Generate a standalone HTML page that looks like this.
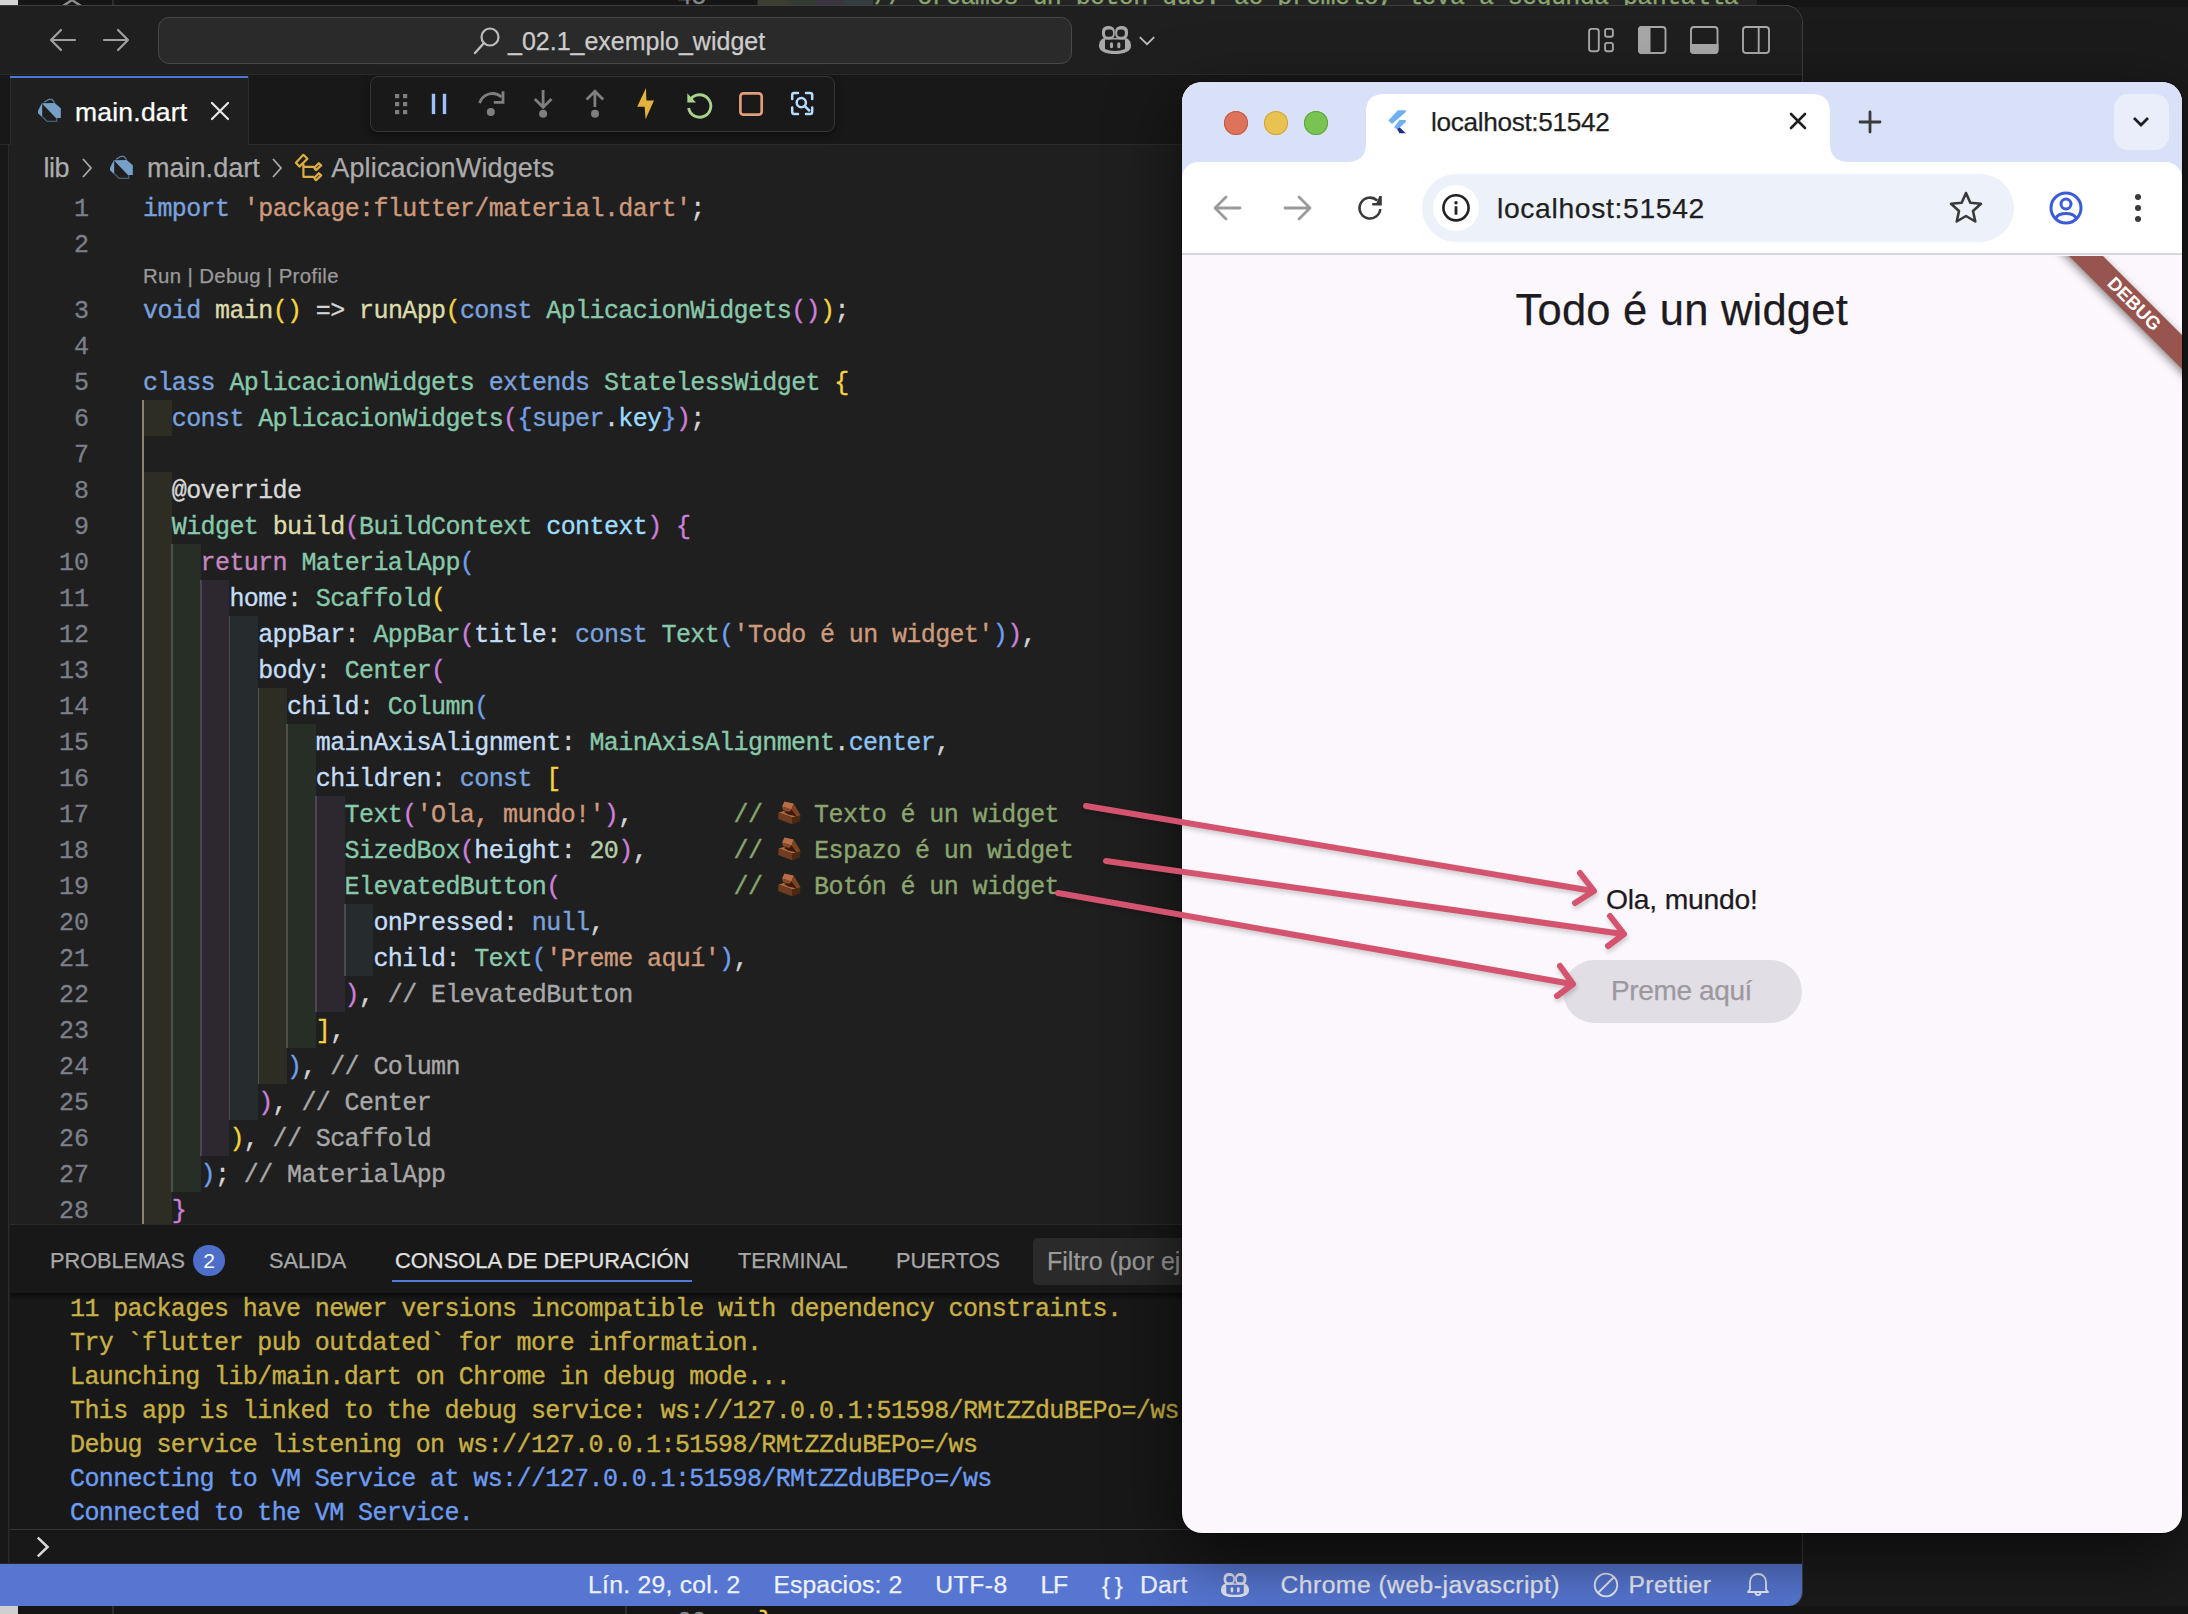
<!DOCTYPE html>
<html><head><meta charset="utf-8"><style>
*{margin:0;padding:0;box-sizing:border-box}
html,body{width:2188px;height:1614px;overflow:hidden;background:#1b1b1b;position:relative}
body{font-family:"Liberation Sans",sans-serif}
.abs{position:absolute}
.t{position:absolute;line-height:1;white-space:nowrap;-webkit-text-stroke:0.25px currentColor}
.cl{position:absolute;font-family:"Liberation Mono",monospace;font-size:25px;letter-spacing:-0.60px;line-height:1;white-space:pre;-webkit-text-stroke:0.35px currentColor}
.ln{position:absolute;left:0;width:89px;text-align:right;font-family:"Liberation Mono",monospace;font-size:25px;letter-spacing:0;line-height:1;color:#7b808a;white-space:pre;-webkit-text-stroke:0.3px currentColor}
.rb{position:absolute}
.gd{position:absolute;width:1.5px}
.brick{display:inline-block;width:23px;height:1px;letter-spacing:0}
</style></head><body>
<div class="abs" style="left:0;top:0;width:2188px;height:7px;background:#151515;overflow:hidden"><div class="abs" style="left:0;top:0;width:18px;height:7px;background:#d4d4d4"></div><svg class="abs" style="left:60px;top:-8px" width="24" height="16" viewBox="0 0 24 16"><path d="M3 14 L21 2 M3 2 L21 14" stroke="#8a8a8a" stroke-width="2.5"/></svg><div class="abs" style="left:112px;top:0;width:1.5px;height:7px;background:#2c2c2c"></div><div class="abs" style="left:757px;top:0;width:1000px;height:7px;background:#242424"></div><div class="abs" style="left:758px;top:0;width:30px;height:7px;background:#3a3d30"></div><div class="abs" style="left:788px;top:0;width:28px;height:7px;background:#343b33"></div><div class="abs" style="left:816px;top:0;width:28px;height:7px;background:#3b3540"></div><div class="abs" style="left:844px;top:0;width:29px;height:7px;background:#333d40"></div><div class="cl" style="left:677px;top:-15px;color:#858585">45</div><div class="cl" style="left:874px;top:-15px;color:#8aa56e">// creamos un botón que: ao premelo, leva a segunda pantalla</div></div>
<div class="abs" id="vsc" style="left:0;top:6px;width:1802px;height:1600px;background:#1f1f1f;border-top-right-radius:17px;border-bottom-right-radius:14px;overflow:hidden;box-shadow:0 0 0 1px #3e3e3e, 0 -1px 0 0 #6a6a6a">
<div class="abs" style="left:0;top:0;width:1802px;height:69px;background:#1f1f1f;border-bottom:1px solid #2b2b2b"></div>
</div>
<div class="abs" style="left:0;top:145px;width:9px;height:1420px;background:#181818;border-right:1px solid #2b2b2b"></div>
<div class="abs" style="left:158px;top:17px;width:914px;height:47px;background:#2a2a2a;border:1.5px solid #474747;border-radius:11px"></div>
<svg class="abs" style="left:470px;top:24px" width="34" height="34" viewBox="0 0 34 34"><circle cx="20" cy="13" r="8.5" fill="none" stroke="#bdbdbd" stroke-width="2.2"/><path d="M14 19 L5 29" stroke="#bdbdbd" stroke-width="2.4" stroke-linecap="round"/></svg>
<div class="t" style="left:508.0px;top:28.8px;font-size:25.00px;color:#cccccc;">_02.1_exemplo_widget</div>
<svg class="abs" style="left:46px;top:26px" width="34" height="28" viewBox="0 0 34 28"><path d="M29 14 H5 M15 4 L5 14 L15 24" fill="none" stroke="#a0a0a0" stroke-width="2.2" stroke-linecap="round" stroke-linejoin="round"/></svg>
<svg class="abs" style="left:100px;top:26px" width="34" height="28" viewBox="0 0 34 28"><path d="M4 14 H28 M18 4 L28 14 L18 24" fill="none" stroke="#a0a0a0" stroke-width="2.2" stroke-linecap="round" stroke-linejoin="round"/></svg>
<svg class="abs" style="left:1099.0px;top:26.0px" width="32.0" height="28.0" viewBox="0 0 32 28"><path d="M0 20 C0 15 3 12 6 12 L26 12 C29 12 32 15 32 20 C32 25.5 25 28 16 28 C7 28 0 25.5 0 20 Z" fill="#a8a8a8"/><path d="M6 13.5 H26 V23 C20 25.5 12 25.5 6 23 Z" fill="#1f1f1f"/><rect x="3" y="0" width="12.8" height="13.5" rx="5.5" fill="#a8a8a8"/><rect x="16.2" y="0" width="12.8" height="13.5" rx="5.5" fill="#a8a8a8"/><rect x="6" y="3.4" width="8" height="7.3" rx="3" fill="#1f1f1f"/><rect x="18.2" y="3.4" width="7.6" height="7.3" rx="3" fill="#1f1f1f"/><rect x="11" y="16.2" width="3" height="6" rx="1.5" fill="#a8a8a8"/><rect x="18.3" y="16.2" width="3" height="6" rx="1.5" fill="#a8a8a8"/></svg>
<svg class="abs" style="left:1136px;top:33px" width="22" height="16" viewBox="1136 33 22 16"><path d="M1139.8 37.2 L1147 44.2 L1154.2 37.2" fill="none" stroke="#bdbdbd" stroke-width="1.8"/></svg>
<svg class="abs" style="left:1580px;top:20px" width="200" height="40" viewBox="1580 20 200 40"><g fill="none" stroke="#a8a8a8" stroke-width="1.9"><rect x="1589.1" y="28.9" width="9.7" height="22.3" rx="2.5"/><rect x="1605.1" y="28.9" width="7.8" height="7.8" rx="2"/><rect x="1605.1" y="42.9" width="7.8" height="8.3" rx="2"/><rect x="1639" y="27" width="26.5" height="26" rx="3"/><rect x="1691" y="27" width="26.5" height="26" rx="3"/><rect x="1743" y="27" width="26" height="26" rx="3"/><path d="M1758.7 27 V53"/></g><g fill="#a8a8a8"><path d="M1642 26 H1650.5 V54 H1642 Q1638 54 1638 50 V30 Q1638 26 1642 26 Z"/><path d="M1690 44 H1718.5 V50 Q1718.5 54 1714.5 54 H1694 Q1690 54 1690 50 Z"/></g></svg>
<div class="abs" style="left:0;top:75px;width:1802px;height:70px;background:#181818;border-bottom:1px solid #2b2b2b"></div>
<div class="abs" style="left:10px;top:76px;width:239px;height:69px;background:#1f1f1f;border-right:1px solid #2b2b2b;border-left:1px solid #2b2b2b"></div>
<div class="abs" style="left:10px;top:76px;width:238px;height:2px;background:#4a78d8"></div>
<svg class="abs" style="left:37px;top:98px" width="26" height="26" viewBox="0 0 26 26"><path d="M4.8 5.3 L17.7 5.1 L23.8 10.2 L23.8 19.9 L18.9 19.9 Z" fill="#76a0c8"/><path d="M4.8 5.3 L1 12.8 L1 15.2 L5.2 19.2 L5.2 6 Z" fill="#76a0c8"/><path d="M7.1 4.3 L11.8 1.4 L14.9 1.4 L17.5 4.6" fill="none" stroke="#5f82a6" stroke-width="1.3"/><path d="M5.2 18.6 L10.2 23.4 L19.6 23.4 L19.6 19.9" fill="none" stroke="#4a5f76" stroke-width="1.4"/></svg>
<div class="t" style="left:75.0px;top:98.6px;font-size:26.50px;color:#ffffff;letter-spacing:0.215px;">main.dart</div>
<svg class="abs" style="left:209px;top:100px" width="22" height="22" viewBox="0 0 22 22"><path d="M3 3 L19 19 M19 3 L3 19" stroke="#e8e8e8" stroke-width="2.2" stroke-linecap="round"/></svg>
<div class="abs" style="left:10px;top:146px;width:1172px;height:44px;background:#1f1f1f"></div>
<div class="t" style="left:43.4px;top:154.7px;font-size:27.00px;color:#ababab;letter-spacing:-0.404px;">lib</div>
<svg class="abs" style="left:80px;top:157px" width="14" height="22" viewBox="0 0 14 22"><path d="M3 2 L11 11 L3 20" fill="none" stroke="#a8a8a8" stroke-width="1.8"/></svg>
<svg class="abs" style="left:109px;top:155px" width="26" height="26" viewBox="0 0 26 26"><path d="M4.8 5.3 L17.7 5.1 L23.8 10.2 L23.8 19.9 L18.9 19.9 Z" fill="#76a0c8"/><path d="M4.8 5.3 L1 12.8 L1 15.2 L5.2 19.2 L5.2 6 Z" fill="#76a0c8"/><path d="M7.1 4.3 L11.8 1.4 L14.9 1.4 L17.5 4.6" fill="none" stroke="#5f82a6" stroke-width="1.3"/><path d="M5.2 18.6 L10.2 23.4 L19.6 23.4 L19.6 19.9" fill="none" stroke="#4a5f76" stroke-width="1.4"/></svg>
<div class="t" style="left:146.9px;top:154.7px;font-size:27.00px;color:#ababab;letter-spacing:0.050px;">main.dart</div>
<svg class="abs" style="left:270px;top:157px" width="14" height="22" viewBox="0 0 14 22"><path d="M3 2 L11 11 L3 20" fill="none" stroke="#a8a8a8" stroke-width="1.8"/></svg>
<svg class="abs" style="left:290px;top:150px" width="40" height="36" viewBox="290 150 40 36"><g fill="none" stroke="#e0ad42" stroke-width="2.2" stroke-linejoin="round"><path d="M295.9 162.7 L303.4 154.8 L307.4 158.7 L299.4 166.6 Z"/><path d="M303.4 163.8 V176.8 H314 M303.4 166.8 H314.3"/><path d="M314.2 167.8 L318.8 163.2 L321.2 165.4 L316 170.1 Z"/><path d="M314.2 177.9 L318.8 173.2 L321.2 175.4 L316 180.3 Z"/></g></svg>
<div class="t" style="left:331.3px;top:154.7px;font-size:27.00px;color:#ababab;letter-spacing:0.141px;">AplicacionWidgets</div>
<div class="t" style="left:143.0px;top:266.4px;font-size:20.40px;color:#9a9a9a;letter-spacing:0.351px;">Run | Debug | Profile</div>
<div class="abs" id="code" style="left:0;top:0;width:1182px;height:1224px;overflow:hidden">
<div class="rb" style="left:143.0px;top:399.9px;width:28.8px;height:36px;background:#2e2d24"></div>
<div class="rb" style="left:143.0px;top:471.9px;width:28.8px;height:36px;background:#2e2d24"></div>
<div class="rb" style="left:143.0px;top:507.9px;width:28.8px;height:36px;background:#2e2d24"></div>
<div class="rb" style="left:143.0px;top:543.9px;width:28.8px;height:36px;background:#2e2d24"></div>
<div class="rb" style="left:171.8px;top:543.9px;width:28.8px;height:36px;background:#272e26"></div>
<div class="rb" style="left:143.0px;top:579.9px;width:28.8px;height:36px;background:#2e2d24"></div>
<div class="rb" style="left:171.8px;top:579.9px;width:28.8px;height:36px;background:#272e26"></div>
<div class="rb" style="left:200.6px;top:579.9px;width:28.8px;height:36px;background:#2d272f"></div>
<div class="rb" style="left:143.0px;top:615.9px;width:28.8px;height:36px;background:#2e2d24"></div>
<div class="rb" style="left:171.8px;top:615.9px;width:28.8px;height:36px;background:#272e26"></div>
<div class="rb" style="left:200.6px;top:615.9px;width:28.8px;height:36px;background:#2d272f"></div>
<div class="rb" style="left:229.4px;top:615.9px;width:28.8px;height:36px;background:#262c2e"></div>
<div class="rb" style="left:143.0px;top:651.9px;width:28.8px;height:36px;background:#2e2d24"></div>
<div class="rb" style="left:171.8px;top:651.9px;width:28.8px;height:36px;background:#272e26"></div>
<div class="rb" style="left:200.6px;top:651.9px;width:28.8px;height:36px;background:#2d272f"></div>
<div class="rb" style="left:229.4px;top:651.9px;width:28.8px;height:36px;background:#262c2e"></div>
<div class="rb" style="left:143.0px;top:687.9px;width:28.8px;height:36px;background:#2e2d24"></div>
<div class="rb" style="left:171.8px;top:687.9px;width:28.8px;height:36px;background:#272e26"></div>
<div class="rb" style="left:200.6px;top:687.9px;width:28.8px;height:36px;background:#2d272f"></div>
<div class="rb" style="left:229.4px;top:687.9px;width:28.8px;height:36px;background:#262c2e"></div>
<div class="rb" style="left:258.2px;top:687.9px;width:28.8px;height:36px;background:#2e2d24"></div>
<div class="rb" style="left:143.0px;top:723.9px;width:28.8px;height:36px;background:#2e2d24"></div>
<div class="rb" style="left:171.8px;top:723.9px;width:28.8px;height:36px;background:#272e26"></div>
<div class="rb" style="left:200.6px;top:723.9px;width:28.8px;height:36px;background:#2d272f"></div>
<div class="rb" style="left:229.4px;top:723.9px;width:28.8px;height:36px;background:#262c2e"></div>
<div class="rb" style="left:258.2px;top:723.9px;width:28.8px;height:36px;background:#2e2d24"></div>
<div class="rb" style="left:287.0px;top:723.9px;width:28.8px;height:36px;background:#272e26"></div>
<div class="rb" style="left:143.0px;top:759.9px;width:28.8px;height:36px;background:#2e2d24"></div>
<div class="rb" style="left:171.8px;top:759.9px;width:28.8px;height:36px;background:#272e26"></div>
<div class="rb" style="left:200.6px;top:759.9px;width:28.8px;height:36px;background:#2d272f"></div>
<div class="rb" style="left:229.4px;top:759.9px;width:28.8px;height:36px;background:#262c2e"></div>
<div class="rb" style="left:258.2px;top:759.9px;width:28.8px;height:36px;background:#2e2d24"></div>
<div class="rb" style="left:287.0px;top:759.9px;width:28.8px;height:36px;background:#272e26"></div>
<div class="rb" style="left:143.0px;top:795.9px;width:28.8px;height:36px;background:#2e2d24"></div>
<div class="rb" style="left:171.8px;top:795.9px;width:28.8px;height:36px;background:#272e26"></div>
<div class="rb" style="left:200.6px;top:795.9px;width:28.8px;height:36px;background:#2d272f"></div>
<div class="rb" style="left:229.4px;top:795.9px;width:28.8px;height:36px;background:#262c2e"></div>
<div class="rb" style="left:258.2px;top:795.9px;width:28.8px;height:36px;background:#2e2d24"></div>
<div class="rb" style="left:287.0px;top:795.9px;width:28.8px;height:36px;background:#272e26"></div>
<div class="rb" style="left:315.8px;top:795.9px;width:28.8px;height:36px;background:#2d272f"></div>
<div class="rb" style="left:143.0px;top:831.9px;width:28.8px;height:36px;background:#2e2d24"></div>
<div class="rb" style="left:171.8px;top:831.9px;width:28.8px;height:36px;background:#272e26"></div>
<div class="rb" style="left:200.6px;top:831.9px;width:28.8px;height:36px;background:#2d272f"></div>
<div class="rb" style="left:229.4px;top:831.9px;width:28.8px;height:36px;background:#262c2e"></div>
<div class="rb" style="left:258.2px;top:831.9px;width:28.8px;height:36px;background:#2e2d24"></div>
<div class="rb" style="left:287.0px;top:831.9px;width:28.8px;height:36px;background:#272e26"></div>
<div class="rb" style="left:315.8px;top:831.9px;width:28.8px;height:36px;background:#2d272f"></div>
<div class="rb" style="left:143.0px;top:867.9px;width:28.8px;height:36px;background:#2e2d24"></div>
<div class="rb" style="left:171.8px;top:867.9px;width:28.8px;height:36px;background:#272e26"></div>
<div class="rb" style="left:200.6px;top:867.9px;width:28.8px;height:36px;background:#2d272f"></div>
<div class="rb" style="left:229.4px;top:867.9px;width:28.8px;height:36px;background:#262c2e"></div>
<div class="rb" style="left:258.2px;top:867.9px;width:28.8px;height:36px;background:#2e2d24"></div>
<div class="rb" style="left:287.0px;top:867.9px;width:28.8px;height:36px;background:#272e26"></div>
<div class="rb" style="left:315.8px;top:867.9px;width:28.8px;height:36px;background:#2d272f"></div>
<div class="rb" style="left:143.0px;top:903.9px;width:28.8px;height:36px;background:#2e2d24"></div>
<div class="rb" style="left:171.8px;top:903.9px;width:28.8px;height:36px;background:#272e26"></div>
<div class="rb" style="left:200.6px;top:903.9px;width:28.8px;height:36px;background:#2d272f"></div>
<div class="rb" style="left:229.4px;top:903.9px;width:28.8px;height:36px;background:#262c2e"></div>
<div class="rb" style="left:258.2px;top:903.9px;width:28.8px;height:36px;background:#2e2d24"></div>
<div class="rb" style="left:287.0px;top:903.9px;width:28.8px;height:36px;background:#272e26"></div>
<div class="rb" style="left:315.8px;top:903.9px;width:28.8px;height:36px;background:#2d272f"></div>
<div class="rb" style="left:344.6px;top:903.9px;width:28.8px;height:36px;background:#262c2e"></div>
<div class="rb" style="left:143.0px;top:939.9px;width:28.8px;height:36px;background:#2e2d24"></div>
<div class="rb" style="left:171.8px;top:939.9px;width:28.8px;height:36px;background:#272e26"></div>
<div class="rb" style="left:200.6px;top:939.9px;width:28.8px;height:36px;background:#2d272f"></div>
<div class="rb" style="left:229.4px;top:939.9px;width:28.8px;height:36px;background:#262c2e"></div>
<div class="rb" style="left:258.2px;top:939.9px;width:28.8px;height:36px;background:#2e2d24"></div>
<div class="rb" style="left:287.0px;top:939.9px;width:28.8px;height:36px;background:#272e26"></div>
<div class="rb" style="left:315.8px;top:939.9px;width:28.8px;height:36px;background:#2d272f"></div>
<div class="rb" style="left:344.6px;top:939.9px;width:28.8px;height:36px;background:#262c2e"></div>
<div class="rb" style="left:143.0px;top:975.9px;width:28.8px;height:36px;background:#2e2d24"></div>
<div class="rb" style="left:171.8px;top:975.9px;width:28.8px;height:36px;background:#272e26"></div>
<div class="rb" style="left:200.6px;top:975.9px;width:28.8px;height:36px;background:#2d272f"></div>
<div class="rb" style="left:229.4px;top:975.9px;width:28.8px;height:36px;background:#262c2e"></div>
<div class="rb" style="left:258.2px;top:975.9px;width:28.8px;height:36px;background:#2e2d24"></div>
<div class="rb" style="left:287.0px;top:975.9px;width:28.8px;height:36px;background:#272e26"></div>
<div class="rb" style="left:315.8px;top:975.9px;width:28.8px;height:36px;background:#2d272f"></div>
<div class="rb" style="left:143.0px;top:1011.9px;width:28.8px;height:36px;background:#2e2d24"></div>
<div class="rb" style="left:171.8px;top:1011.9px;width:28.8px;height:36px;background:#272e26"></div>
<div class="rb" style="left:200.6px;top:1011.9px;width:28.8px;height:36px;background:#2d272f"></div>
<div class="rb" style="left:229.4px;top:1011.9px;width:28.8px;height:36px;background:#262c2e"></div>
<div class="rb" style="left:258.2px;top:1011.9px;width:28.8px;height:36px;background:#2e2d24"></div>
<div class="rb" style="left:287.0px;top:1011.9px;width:28.8px;height:36px;background:#272e26"></div>
<div class="rb" style="left:143.0px;top:1047.9px;width:28.8px;height:36px;background:#2e2d24"></div>
<div class="rb" style="left:171.8px;top:1047.9px;width:28.8px;height:36px;background:#272e26"></div>
<div class="rb" style="left:200.6px;top:1047.9px;width:28.8px;height:36px;background:#2d272f"></div>
<div class="rb" style="left:229.4px;top:1047.9px;width:28.8px;height:36px;background:#262c2e"></div>
<div class="rb" style="left:258.2px;top:1047.9px;width:28.8px;height:36px;background:#2e2d24"></div>
<div class="rb" style="left:143.0px;top:1083.9px;width:28.8px;height:36px;background:#2e2d24"></div>
<div class="rb" style="left:171.8px;top:1083.9px;width:28.8px;height:36px;background:#272e26"></div>
<div class="rb" style="left:200.6px;top:1083.9px;width:28.8px;height:36px;background:#2d272f"></div>
<div class="rb" style="left:229.4px;top:1083.9px;width:28.8px;height:36px;background:#262c2e"></div>
<div class="rb" style="left:143.0px;top:1119.9px;width:28.8px;height:36px;background:#2e2d24"></div>
<div class="rb" style="left:171.8px;top:1119.9px;width:28.8px;height:36px;background:#272e26"></div>
<div class="rb" style="left:200.6px;top:1119.9px;width:28.8px;height:36px;background:#2d272f"></div>
<div class="rb" style="left:143.0px;top:1155.9px;width:28.8px;height:36px;background:#2e2d24"></div>
<div class="rb" style="left:171.8px;top:1155.9px;width:28.8px;height:36px;background:#272e26"></div>
<div class="rb" style="left:143.0px;top:1191.9px;width:28.8px;height:36px;background:#2e2d24"></div>
<div class="gd" style="left:142.0px;top:399.9px;height:828.0px;background:#8a846e"></div>
<div class="gd" style="left:171.2px;top:543.9px;height:648.0px;background:#4a5147"></div>
<div class="gd" style="left:200.0px;top:579.9px;height:576.0px;background:#4b4651"></div>
<div class="gd" style="left:228.8px;top:615.9px;height:504.0px;background:#464e50"></div>
<div class="gd" style="left:257.6px;top:687.9px;height:396.0px;background:#58553f"></div>
<div class="gd" style="left:286.4px;top:723.9px;height:324.0px;background:#4a5147"></div>
<div class="gd" style="left:315.2px;top:795.9px;height:216.0px;background:#4b4651"></div>
<div class="gd" style="left:344.0px;top:903.9px;height:72.0px;background:#464e50"></div>
<div class="ln" style="top:197.1px">1</div>
<div class="cl" style="left:143.0px;top:197.1px"><span style="color:#7aa2de">import</span><span style="color:#d4d4d4">&nbsp;</span><span style="color:#ce9a7c">&#x27;package:flutter/material.dart&#x27;</span><span style="color:#d4d4d4">;</span></div>
<div class="ln" style="top:233.1px">2</div>
<div class="ln" style="top:299.1px">3</div>
<div class="cl" style="left:143.0px;top:299.1px"><span style="color:#7aa2de">void</span><span style="color:#d4d4d4">&nbsp;</span><span style="color:#dcdcaa">main</span><span style="color:#f5d442">(</span><span style="color:#f5d442">)</span><span style="color:#d4d4d4">&nbsp;=&gt;&nbsp;</span><span style="color:#dcdcaa">runApp</span><span style="color:#f5d442">(</span><span style="color:#7aa2de">const</span><span style="color:#d4d4d4">&nbsp;</span><span style="color:#88c9ab">AplicacionWidgets</span><span style="color:#cd7fdc">(</span><span style="color:#cd7fdc">)</span><span style="color:#f5d442">)</span><span style="color:#d4d4d4">;</span></div>
<div class="ln" style="top:335.1px">4</div>
<div class="ln" style="top:371.1px">5</div>
<div class="cl" style="left:143.0px;top:371.1px"><span style="color:#7aa2de">class</span><span style="color:#d4d4d4">&nbsp;</span><span style="color:#88c9ab">AplicacionWidgets</span><span style="color:#d4d4d4">&nbsp;</span><span style="color:#7aa2de">extends</span><span style="color:#d4d4d4">&nbsp;</span><span style="color:#88c9ab">StatelessWidget</span><span style="color:#d4d4d4">&nbsp;</span><span style="color:#f5d442">{</span></div>
<div class="ln" style="top:407.1px">6</div>
<div class="cl" style="left:171.8px;top:407.1px"><span style="color:#7aa2de">const</span><span style="color:#d4d4d4">&nbsp;</span><span style="color:#88c9ab">AplicacionWidgets</span><span style="color:#cd7fdc">(</span><span style="color:#6fa0ee">{</span><span style="color:#7aa2de">super</span><span style="color:#d4d4d4">.</span><span style="color:#9cdcfe">key</span><span style="color:#6fa0ee">}</span><span style="color:#cd7fdc">)</span><span style="color:#d4d4d4">;</span></div>
<div class="ln" style="top:443.1px">7</div>
<div class="ln" style="top:479.1px">8</div>
<div class="cl" style="left:171.8px;top:479.1px"><span style="color:#d8d8d8">@override</span></div>
<div class="ln" style="top:515.1px">9</div>
<div class="cl" style="left:171.8px;top:515.1px"><span style="color:#88c9ab">Widget</span><span style="color:#d4d4d4">&nbsp;</span><span style="color:#dcdcaa">build</span><span style="color:#cd7fdc">(</span><span style="color:#88c9ab">BuildContext</span><span style="color:#d4d4d4">&nbsp;</span><span style="color:#9cdcfe">context</span><span style="color:#cd7fdc">)</span><span style="color:#d4d4d4">&nbsp;</span><span style="color:#cd7fdc">{</span></div>
<div class="ln" style="top:551.1px">10</div>
<div class="cl" style="left:200.6px;top:551.1px"><span style="color:#c586c0">return</span><span style="color:#d4d4d4">&nbsp;</span><span style="color:#88c9ab">MaterialApp</span><span style="color:#6fa0ee">(</span></div>
<div class="ln" style="top:587.1px">11</div>
<div class="cl" style="left:229.4px;top:587.1px"><span style="color:#c4ddf7">home</span><span style="color:#d4d4d4">:&nbsp;</span><span style="color:#88c9ab">Scaffold</span><span style="color:#f5d442">(</span></div>
<div class="ln" style="top:623.1px">12</div>
<div class="cl" style="left:258.2px;top:623.1px"><span style="color:#c4ddf7">appBar</span><span style="color:#d4d4d4">:&nbsp;</span><span style="color:#88c9ab">AppBar</span><span style="color:#cd7fdc">(</span><span style="color:#c4ddf7">title</span><span style="color:#d4d4d4">:&nbsp;</span><span style="color:#7aa2de">const</span><span style="color:#d4d4d4">&nbsp;</span><span style="color:#88c9ab">Text</span><span style="color:#6fa0ee">(</span><span style="color:#ce9a7c">&#x27;Todo&nbsp;é&nbsp;un&nbsp;widget&#x27;</span><span style="color:#6fa0ee">)</span><span style="color:#cd7fdc">)</span><span style="color:#d4d4d4">,</span></div>
<div class="ln" style="top:659.1px">13</div>
<div class="cl" style="left:258.2px;top:659.1px"><span style="color:#c4ddf7">body</span><span style="color:#d4d4d4">:&nbsp;</span><span style="color:#88c9ab">Center</span><span style="color:#cd7fdc">(</span></div>
<div class="ln" style="top:695.1px">14</div>
<div class="cl" style="left:287.0px;top:695.1px"><span style="color:#c4ddf7">child</span><span style="color:#d4d4d4">:&nbsp;</span><span style="color:#88c9ab">Column</span><span style="color:#6fa0ee">(</span></div>
<div class="ln" style="top:731.1px">15</div>
<div class="cl" style="left:315.8px;top:731.1px"><span style="color:#c4ddf7">mainAxisAlignment</span><span style="color:#d4d4d4">:&nbsp;</span><span style="color:#88c9ab">MainAxisAlignment</span><span style="color:#d4d4d4">.</span><span style="color:#8ec3f3">center</span><span style="color:#d4d4d4">,</span></div>
<div class="ln" style="top:767.1px">16</div>
<div class="cl" style="left:315.8px;top:767.1px"><span style="color:#c4ddf7">children</span><span style="color:#d4d4d4">:&nbsp;</span><span style="color:#7aa2de">const</span><span style="color:#d4d4d4">&nbsp;</span><span style="color:#f5d442">[</span></div>
<div class="ln" style="top:803.1px">17</div>
<div class="abs" style="left:778px;top:800.8px"><svg width="23" height="24" viewBox="0 0 23 24" style="display:block"><path d="M0.5 11.5 L6 10 L22.5 14 L14.5 16.5 Z" fill="#b46a42"/><path d="M0.5 11.5 L14.5 16.5 L14.5 23.5 L0.2 18 Z" fill="#6e3c1f"/><path d="M14.5 16.5 L22.5 14 L22 20.5 L14.5 23.5 Z" fill="#4a2814"/><path d="M6 11 L13.5 8 L19 15.5 L10 13.5 Z" fill="#3a1a0c"/><path d="M4 5.5 L6.5 0.5 L15.8 2.5 L13.5 8.5 Z" fill="#b96d44"/><path d="M4 5.5 L13.5 8.5 L11 11 L5 9 Z" fill="#8a4a26"/><path d="M13.5 8.5 L15.8 2.5 L22.5 14 L19 15.5 Z" fill="#7c4322"/></svg></div>
<div class="cl" style="left:344.6px;top:803.1px"><span style="color:#88c9ab">Text</span><span style="color:#cd7fdc">(</span><span style="color:#ce9a7c">&#x27;Ola,&nbsp;mundo!&#x27;</span><span style="color:#cd7fdc">)</span><span style="color:#d4d4d4">,&nbsp;&nbsp;&nbsp;&nbsp;&nbsp;&nbsp;&nbsp;</span><span style="color:#8aa56e">//&nbsp;</span><span class="brick"></span><span style="color:#8aa56e">&nbsp;Texto&nbsp;é&nbsp;un&nbsp;widget</span></div>
<div class="ln" style="top:839.1px">18</div>
<div class="abs" style="left:778px;top:836.8px"><svg width="23" height="24" viewBox="0 0 23 24" style="display:block"><path d="M0.5 11.5 L6 10 L22.5 14 L14.5 16.5 Z" fill="#b46a42"/><path d="M0.5 11.5 L14.5 16.5 L14.5 23.5 L0.2 18 Z" fill="#6e3c1f"/><path d="M14.5 16.5 L22.5 14 L22 20.5 L14.5 23.5 Z" fill="#4a2814"/><path d="M6 11 L13.5 8 L19 15.5 L10 13.5 Z" fill="#3a1a0c"/><path d="M4 5.5 L6.5 0.5 L15.8 2.5 L13.5 8.5 Z" fill="#b96d44"/><path d="M4 5.5 L13.5 8.5 L11 11 L5 9 Z" fill="#8a4a26"/><path d="M13.5 8.5 L15.8 2.5 L22.5 14 L19 15.5 Z" fill="#7c4322"/></svg></div>
<div class="cl" style="left:344.6px;top:839.1px"><span style="color:#88c9ab">SizedBox</span><span style="color:#cd7fdc">(</span><span style="color:#c4ddf7">height</span><span style="color:#d4d4d4">:&nbsp;</span><span style="color:#b5cea8">20</span><span style="color:#cd7fdc">)</span><span style="color:#d4d4d4">,&nbsp;&nbsp;&nbsp;&nbsp;&nbsp;&nbsp;</span><span style="color:#8aa56e">//&nbsp;</span><span class="brick"></span><span style="color:#8aa56e">&nbsp;Espazo&nbsp;é&nbsp;un&nbsp;widget</span></div>
<div class="ln" style="top:875.1px">19</div>
<div class="abs" style="left:778px;top:872.8px"><svg width="23" height="24" viewBox="0 0 23 24" style="display:block"><path d="M0.5 11.5 L6 10 L22.5 14 L14.5 16.5 Z" fill="#b46a42"/><path d="M0.5 11.5 L14.5 16.5 L14.5 23.5 L0.2 18 Z" fill="#6e3c1f"/><path d="M14.5 16.5 L22.5 14 L22 20.5 L14.5 23.5 Z" fill="#4a2814"/><path d="M6 11 L13.5 8 L19 15.5 L10 13.5 Z" fill="#3a1a0c"/><path d="M4 5.5 L6.5 0.5 L15.8 2.5 L13.5 8.5 Z" fill="#b96d44"/><path d="M4 5.5 L13.5 8.5 L11 11 L5 9 Z" fill="#8a4a26"/><path d="M13.5 8.5 L15.8 2.5 L22.5 14 L19 15.5 Z" fill="#7c4322"/></svg></div>
<div class="cl" style="left:344.6px;top:875.1px"><span style="color:#88c9ab">ElevatedButton</span><span style="color:#cd7fdc">(</span><span style="color:#d4d4d4">&nbsp;&nbsp;&nbsp;&nbsp;&nbsp;&nbsp;&nbsp;&nbsp;&nbsp;&nbsp;&nbsp;&nbsp;</span><span style="color:#8aa56e">//&nbsp;</span><span class="brick"></span><span style="color:#8aa56e">&nbsp;Botón&nbsp;é&nbsp;un&nbsp;widget</span></div>
<div class="ln" style="top:911.1px">20</div>
<div class="cl" style="left:373.4px;top:911.1px"><span style="color:#c4ddf7">onPressed</span><span style="color:#d4d4d4">:&nbsp;</span><span style="color:#7aa2de">null</span><span style="color:#d4d4d4">,</span></div>
<div class="ln" style="top:947.1px">21</div>
<div class="cl" style="left:373.4px;top:947.1px"><span style="color:#c4ddf7">child</span><span style="color:#d4d4d4">:&nbsp;</span><span style="color:#88c9ab">Text</span><span style="color:#6fa0ee">(</span><span style="color:#ce9a7c">&#x27;Preme&nbsp;aquí&#x27;</span><span style="color:#6fa0ee">)</span><span style="color:#d4d4d4">,</span></div>
<div class="ln" style="top:983.1px">22</div>
<div class="cl" style="left:344.6px;top:983.1px"><span style="color:#cd7fdc">)</span><span style="color:#d4d4d4">,&nbsp;</span><span style="color:#a8a8a8">//&nbsp;ElevatedButton</span></div>
<div class="ln" style="top:1019.1px">23</div>
<div class="cl" style="left:315.8px;top:1019.1px"><span style="color:#f5d442">]</span><span style="color:#d4d4d4">,</span></div>
<div class="ln" style="top:1055.1px">24</div>
<div class="cl" style="left:287.0px;top:1055.1px"><span style="color:#6fa0ee">)</span><span style="color:#d4d4d4">,&nbsp;</span><span style="color:#a8a8a8">//&nbsp;Column</span></div>
<div class="ln" style="top:1091.1px">25</div>
<div class="cl" style="left:258.2px;top:1091.1px"><span style="color:#cd7fdc">)</span><span style="color:#d4d4d4">,&nbsp;</span><span style="color:#a8a8a8">//&nbsp;Center</span></div>
<div class="ln" style="top:1127.1px">26</div>
<div class="cl" style="left:229.4px;top:1127.1px"><span style="color:#f5d442">)</span><span style="color:#d4d4d4">,&nbsp;</span><span style="color:#a8a8a8">//&nbsp;Scaffold</span></div>
<div class="ln" style="top:1163.1px">27</div>
<div class="cl" style="left:200.6px;top:1163.1px"><span style="color:#6fa0ee">)</span><span style="color:#d4d4d4">;&nbsp;</span><span style="color:#a8a8a8">//&nbsp;MaterialApp</span></div>
<div class="ln" style="top:1199.1px">28</div>
<div class="cl" style="left:171.8px;top:1199.1px"><span style="color:#cd7fdc">}</span></div>
</div>
<div class="abs" style="left:370px;top:76px;width:465px;height:56px;background:#191919;border:1.5px solid #363636;border-radius:8px;box-shadow:0 3px 8px rgba(0,0,0,.45)"></div>
<svg class="abs" style="left:370px;top:76px" width="465" height="56" viewBox="370 76 465 56"><g fill="#7f7f7f"><rect x="395" y="94" width="4.2" height="4.2"/><rect x="403" y="94" width="4.2" height="4.2"/><rect x="395" y="102" width="4.2" height="4.2"/><rect x="403" y="102" width="4.2" height="4.2"/><rect x="395" y="110" width="4.2" height="4.2"/><rect x="403" y="110" width="4.2" height="4.2"/></g><g fill="#9fc0fa"><rect x="431.8" y="93.8" width="3.4" height="20.3"/><rect x="442.8" y="93.8" width="3.4" height="20.3"/></g><g fill="none" stroke="#7f7f7f" stroke-width="2.8"><path d="M479.6 103 A13.5 13.5 0 0 1 501.5 97"/><path d="M503 91.2 V102.3 H493.8"/><path d="M543.1 90 V106 M534.8 99 L543.1 107.2 L551.5 99"/><path d="M594.9 107 V91.2 M586.6 99.6 L594.9 91.2 L603.2 99.6"/></g><circle cx="490.8" cy="112" r="4" fill="#7f7f7f"/><circle cx="543.1" cy="113.8" r="4" fill="#7f7f7f"/><circle cx="595" cy="113.8" r="4" fill="#7f7f7f"/><path d="M646 88 L637.2 106.8 L644.6 106.8 L645.6 119.2 L654 100.4 L646.4 100.4 Z" fill="#e3b23f"/><path d="M690.5 99.5 A11.2 11.2 0 1 1 688.6 108" fill="none" stroke="#a7d28c" stroke-width="2.9"/><path d="M687.3 93.3 L687.3 102.4 L696 102.4 Z" fill="#a7d28c"/><rect x="740.4" y="93.4" width="21.3" height="21.3" rx="3" fill="none" stroke="#e29c7a" stroke-width="2.7"/><g fill="none" stroke="#b5dcff" stroke-width="2.5" stroke-linecap="round"><path d="M792.2 99 V95 Q792.2 93 794.2 93 H798 M806 93 H810 Q812.2 93 812.2 95 V99 M812.2 107.5 V111.7 Q812.2 114 810 114 H806 M798 114 H794.2 Q792.2 114 792.2 111.7 V107.5"/><circle cx="801.3" cy="102.6" r="4.6"/><path d="M804.8 106.2 L809.2 110.5"/></g></svg>
<div class="abs" style="left:10px;top:1224px;width:1792px;height:340px;background:#181818;border-top:1px solid #2b2b2b"></div>
<div class="t" style="left:50.0px;top:1249.6px;font-size:21.70px;color:#a8a8a8;">PROBLEMAS</div>
<div class="abs" style="left:193px;top:1245px;width:32px;height:31px;border-radius:16px;background:#4d6fc9;color:#fff;font-size:21px;text-align:center;line-height:31px">2</div>
<div class="t" style="left:269.0px;top:1249.6px;font-size:21.70px;color:#a8a8a8;">SALIDA</div>
<div class="t" style="left:395.0px;top:1249.5px;font-size:21.90px;color:#e0e0e0;">CONSOLA DE DEPURACIÓN</div>
<div class="abs" style="left:392px;top:1280px;width:300px;height:2px;background:#4f7ad8"></div>
<div class="abs" style="left:10px;top:1293px;width:1792px;height:7px;background:linear-gradient(rgba(0,0,0,.55),rgba(0,0,0,0))"></div>
<div class="t" style="left:738.0px;top:1249.6px;font-size:21.70px;color:#a8a8a8;">TERMINAL</div>
<div class="t" style="left:896.0px;top:1249.6px;font-size:21.70px;color:#a8a8a8;">PUERTOS</div>
<div class="abs" style="left:1033px;top:1238px;width:160px;height:47px;background:#2a2a2a;border-radius:5px"></div>
<div class="t" style="left:1047.0px;top:1248.8px;font-size:25.00px;color:#9a9a9a;">Filtro (por ej</div>
<div class="abs" style="left:0;top:0;width:1182px;height:1614px;overflow:hidden">
<div class="cl" style="left:70px;top:1296.8px;color:#c7b046">11&nbsp;packages&nbsp;have&nbsp;newer&nbsp;versions&nbsp;incompatible&nbsp;with&nbsp;dependency&nbsp;constraints.</div>
<div class="cl" style="left:70px;top:1330.8px;color:#c7b046">Try&nbsp;`flutter&nbsp;pub&nbsp;outdated`&nbsp;for&nbsp;more&nbsp;information.</div>
<div class="cl" style="left:70px;top:1364.8px;color:#c7b046">Launching&nbsp;lib/main.dart&nbsp;on&nbsp;Chrome&nbsp;in&nbsp;debug&nbsp;mode...</div>
<div class="cl" style="left:70px;top:1398.8px;color:#c7b046">This&nbsp;app&nbsp;is&nbsp;linked&nbsp;to&nbsp;the&nbsp;debug&nbsp;service:&nbsp;ws://127.0.0.1:51598/RMtZZduBEPo=/ws</div>
<div class="cl" style="left:70px;top:1432.8px;color:#c7b046">Debug&nbsp;service&nbsp;listening&nbsp;on&nbsp;ws://127.0.0.1:51598/RMtZZduBEPo=/ws</div>
<div class="cl" style="left:70px;top:1466.8px;color:#6d9cf2">Connecting&nbsp;to&nbsp;VM&nbsp;Service&nbsp;at&nbsp;ws://127.0.0.1:51598/RMtZZduBEPo=/ws</div>
<div class="cl" style="left:70px;top:1500.8px;color:#6d9cf2">Connected&nbsp;to&nbsp;the&nbsp;VM&nbsp;Service.</div>
</div>
<div class="abs" style="left:10px;top:1528.5px;width:1792px;height:1.5px;background:#363636"></div>
<svg class="abs" style="left:30px;top:1530px" width="26" height="32" viewBox="30 1530 26 32"><path d="M37.8 1537.6 L47.6 1547 L37.8 1556.4" fill="none" stroke="#d8d8d8" stroke-width="2.5"/></svg>
<div class="abs" style="left:0;top:1562.5px;width:1802px;height:43.5px;background:#5676d2;border-top:1.5px solid #2a2424;border-bottom-right-radius:14px"></div>
<div class="t" style="left:588.0px;top:1573.1px;font-size:24.70px;color:#eef1fa;letter-spacing:0.280px;">Lín. 29, col. 2</div>
<div class="t" style="left:773.4px;top:1573.1px;font-size:24.70px;color:#eef1fa;letter-spacing:0.120px;">Espacios: 2</div>
<div class="t" style="left:935.3px;top:1573.1px;font-size:24.70px;color:#eef1fa;letter-spacing:0.485px;">UTF-8</div>
<div class="t" style="left:1040.6px;top:1573.1px;font-size:24.70px;color:#eef1fa;letter-spacing:-1.212px;">LF</div>
<div class="t" style="left:1102.0px;top:1573.7px;font-size:24.00px;color:#eef1fa;">{&thinsp;}</div>
<div class="t" style="left:1140.0px;top:1573.1px;font-size:24.70px;color:#eef1fa;letter-spacing:0.259px;">Dart</div>
<svg class="abs" style="left:1220.6px;top:1572.6px" width="28.0" height="24.5" viewBox="0 0 32 28"><path d="M0 20 C0 15 3 12 6 12 L26 12 C29 12 32 15 32 20 C32 25.5 25 28 16 28 C7 28 0 25.5 0 20 Z" fill="#e4e8f2"/><path d="M6 13.5 H26 V23 C20 25.5 12 25.5 6 23 Z" fill="#5676d2"/><rect x="3" y="0" width="12.8" height="13.5" rx="5.5" fill="#e4e8f2"/><rect x="16.2" y="0" width="12.8" height="13.5" rx="5.5" fill="#e4e8f2"/><rect x="6" y="3.4" width="8" height="7.3" rx="3" fill="#5676d2"/><rect x="18.2" y="3.4" width="7.6" height="7.3" rx="3" fill="#5676d2"/><rect x="11" y="16.2" width="3" height="6" rx="1.5" fill="#e4e8f2"/><rect x="18.3" y="16.2" width="3" height="6" rx="1.5" fill="#e4e8f2"/></svg>
<div class="t" style="left:1280.5px;top:1573.1px;font-size:24.70px;color:#eef1fa;letter-spacing:0.464px;">Chrome (web-javascript)</div>
<svg class="abs" style="left:1592px;top:1571px" width="28" height="28" viewBox="0 0 28 28"><circle cx="14" cy="14" r="11.3" fill="none" stroke="#e8ecf6" stroke-width="1.8"/><path d="M6.5 21.5 L21.5 6.5" stroke="#e8ecf6" stroke-width="1.8"/></svg>
<div class="t" style="left:1628.4px;top:1573.1px;font-size:24.70px;color:#eef1fa;letter-spacing:0.423px;">Prettier</div>
<svg class="abs" style="left:1744px;top:1570px" width="28" height="30" viewBox="0 0 28 30"><path d="M4 22 L6 19.5 L6 12 C6 7 9.5 4 14 4 C18.5 4 22 7 22 12 L22 19.5 L24 22 Z" fill="none" stroke="#e8ecf6" stroke-width="1.8" stroke-linejoin="round"/><path d="M11.5 22.5 C11.5 26 16.5 26 16.5 22.5" fill="none" stroke="#e8ecf6" stroke-width="1.8"/></svg>
<div class="abs" style="left:0;top:1606px;width:2188px;height:8px;background:#151515;overflow:hidden"><div class="abs" style="left:0;top:0;width:18px;height:8px;background:#cfcfcf"></div><div class="abs" style="left:112px;top:0;width:1.5px;height:8px;background:#2c2c2c"></div><div class="abs" style="left:625px;top:0;width:1.5px;height:8px;background:#2c2c2c"></div><div class="cl" style="left:677px;top:4px;color:#858585">00</div><div class="cl" style="left:758px;top:4px;color:#e8c84a">}</div></div>
<div class="abs" id="chrome" style="left:1182px;top:82px;width:1000px;height:1451px;border-radius:20px;overflow:hidden;background:#fcf7fd;box-shadow:0 22px 70px rgba(0,0,0,.6), 0 0 0 1px rgba(0,0,0,.3)">
<div class="abs" style="left:0;top:0;width:1000px;height:110px;background:#d9e1f8"></div>
<div class="abs" style="left:0;top:80px;width:1000px;height:93px;background:#ffffff;border-bottom:2px solid #d8d8dc;border-top-right-radius:16px;border-top-left-radius:16px"></div>
</div>
<div class="abs" style="left:1224.0px;top:111px;width:24px;height:24px;border-radius:12px;background:#dd735b;box-shadow:inset 0 0 0 1px #c45a44"></div>
<div class="abs" style="left:1264.0px;top:111px;width:24px;height:24px;border-radius:12px;background:#e9c352;box-shadow:inset 0 0 0 1px #d1a43a"></div>
<div class="abs" style="left:1304.0px;top:111px;width:24px;height:24px;border-radius:12px;background:#79c353;box-shadow:inset 0 0 0 1px #5ea43c"></div>
<svg class="abs" style="left:1346px;top:94px" width="506" height="70" viewBox="0 0 506 70"><path d="M0 68 Q20 68 20 50 L20 18 Q20 0 38 0 L466 0 Q484 0 484 18 L484 50 Q484 68 504 68 L504 70 L0 70 Z" fill="#ffffff"/></svg>
<svg class="abs" style="left:1380px;top:105px" width="30" height="32" viewBox="1380 105 30 32"><path d="M1398 110.2 L1405.8 110.2 L1405.8 112 L1392 124 L1388.3 120.5 Z" fill="#6eb0f2"/><path d="M1399.5 120.1 L1405.8 120.1 L1405.8 122 L1397.5 129.8 L1394 127.2 Z" fill="#6eb0f2"/><path d="M1397.2 129 L1399.8 127.6 L1405.8 133.3 L1399.5 133.3 Z" fill="#1c2a88"/></svg>
<div class="t" style="left:1431.0px;top:108.8px;font-size:26.20px;color:#1f1f1f;letter-spacing:-0.336px;">localhost:51542</div>
<svg class="abs" style="left:1787px;top:110px" width="22" height="22" viewBox="0 0 22 22"><path d="M4 4 L18 18 M18 4 L4 18" stroke="#1f1f1f" stroke-width="2.6" stroke-linecap="round"/></svg>
<svg class="abs" style="left:1856px;top:108px" width="28" height="28" viewBox="0 0 28 28"><path d="M14 4 V24 M4 14 H24" stroke="#3a3a3a" stroke-width="2.8" stroke-linecap="round"/></svg>
<div class="abs" style="left:2114px;top:94px;width:55px;height:56px;border-radius:14px;background:#eaeefa"></div>
<svg class="abs" style="left:2129px;top:110px" width="24" height="24" viewBox="0 0 24 24"><path d="M5 8 L12 15 L19 8" fill="none" stroke="#1f1f1f" stroke-width="2.8"/></svg>
<svg class="abs" style="left:1210px;top:192px" width="34" height="32" viewBox="0 0 34 32"><path d="M30 16 H6 M16 5 L5 16 L16 27" fill="none" stroke="#9a9a9a" stroke-width="2.8" stroke-linecap="round" stroke-linejoin="round"/></svg>
<svg class="abs" style="left:1281px;top:192px" width="34" height="32" viewBox="0 0 34 32"><path d="M4 16 H28 M18 5 L29 16 L18 27" fill="none" stroke="#9a9a9a" stroke-width="2.8" stroke-linecap="round" stroke-linejoin="round"/></svg>
<svg class="abs" style="left:1350px;top:188px" width="40" height="40" viewBox="1350 188 40 40"><path d="M1380.3 209 A10.4 10.4 0 1 1 1377.2 200.6" fill="none" stroke="#3a3a3a" stroke-width="2.6"/><path d="M1379.3 196.1 H1381.8 V205.6 H1372.2 V203.1 H1376.5 Z" fill="#3a3a3a"/></svg>
<div class="abs" style="left:1422px;top:174px;width:592px;height:68px;border-radius:34px;background:#edf1f9"></div>
<div class="abs" style="left:1433px;top:185px;width:46px;height:46px;border-radius:23px;background:#ffffff"></div>
<svg class="abs" style="left:1436px;top:187px" width="40" height="40" viewBox="1436 187 40 40"><circle cx="1456" cy="207.8" r="12.6" fill="none" stroke="#222" stroke-width="2.6"/><rect x="1454.6" y="206.3" width="2.8" height="8.4" fill="#222"/><circle cx="1456" cy="202.8" r="1.7" fill="#222"/></svg>
<div class="t" style="left:1497.0px;top:194.0px;font-size:28.30px;color:#1f1f1f;letter-spacing:0.650px;">localhost:51542</div>
<svg class="abs" style="left:1948px;top:190px" width="36" height="36" viewBox="0 0 36 36"><path d="M18 3 L22.3 12.8 L33 13.8 L25 21 L27.3 31.5 L18 26 L8.7 31.5 L11 21 L3 13.8 L13.7 12.8 Z" fill="none" stroke="#3a3a3a" stroke-width="2.6" stroke-linejoin="round"/></svg>
<svg class="abs" style="left:2047px;top:189px" width="38" height="38" viewBox="0 0 38 38"><circle cx="19" cy="19" r="15" fill="none" stroke="#3c5cd6" stroke-width="3"/><circle cx="19" cy="15" r="5" fill="none" stroke="#3c5cd6" stroke-width="3"/><path d="M9 29 C12 23 26 23 29 29" fill="none" stroke="#3c5cd6" stroke-width="3"/></svg>
<div class="abs" style="left:2135px;top:194.0px;width:6px;height:6px;border-radius:3px;background:#3a3a3a"></div>
<div class="abs" style="left:2135px;top:205.2px;width:6px;height:6px;border-radius:3px;background:#3a3a3a"></div>
<div class="abs" style="left:2135px;top:216.4px;width:6px;height:6px;border-radius:3px;background:#3a3a3a"></div>
<div class="t" style="left:1515.5px;top:289.0px;font-size:43.50px;color:#1d1b20;letter-spacing:0.225px;">Todo é un widget</div>
<div class="t" style="left:1606.0px;top:884.5px;font-size:28.30px;color:#1d1b20;letter-spacing:-0.223px;">Ola, mundo!</div>
<div class="abs" style="left:1563px;top:960px;width:239px;height:63px;border-radius:32px;background:#e2dee5"></div>
<div class="t" style="left:1611.0px;top:976.9px;font-size:28.00px;color:#9d98a0;letter-spacing:-0.375px;">Preme aquí</div>
<div class="abs" style="left:1182px;top:256px;width:1000px;height:1277px;overflow:hidden;border-bottom-right-radius:20px">
<div class="abs" style="left:832px;top:36px;width:240px;height:24px;background:#985550;transform:rotate(45deg);color:#fff;font-weight:bold;font-size:18.5px;text-align:center;line-height:24px;box-shadow:0 3px 9px rgba(0,0,0,.45)">DEBUG</div>
</div>
<svg class="abs" style="left:0;top:0;filter:drop-shadow(1px 3px 2px rgba(0,0,0,.18))" width="2188" height="1614" viewBox="0 0 2188 1614"><g fill="none" stroke="#d4546f" stroke-width="6" stroke-linecap="round" stroke-linejoin="round"><path d="M1086 806 L1593 891"/><path d="M1580 873 L1594 891 L1575 903"/><path d="M1106 861 L1623 934"/><path d="M1610 916 L1624 934 L1608 946"/><path d="M1058 893 L1572 984"/><path d="M1560 966 L1573 984 L1557 996"/></g></svg>
</body></html>
